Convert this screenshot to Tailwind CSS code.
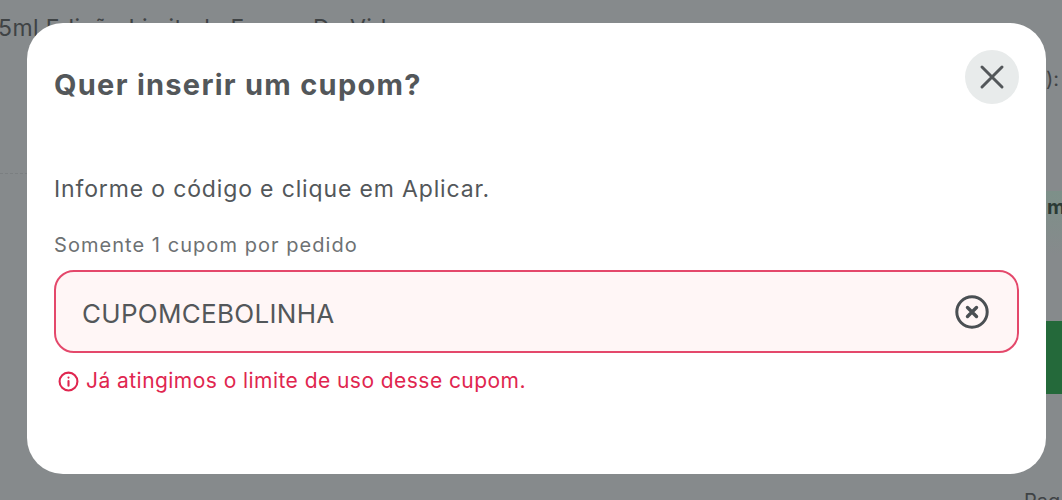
<!DOCTYPE html>
<html lang="pt-BR">
  <head>
    <meta charset="UTF-8" />
    <title>Cupom</title>
    <script src="https://cdn.jsdelivr.net/npm/@tailwindcss/browser@4"></script>
  </head>
  <body class="font-['Inter',sans-serif]">
    <div class="relative w-[1062px] h-[500px] overflow-hidden bg-[#868a8c]">
      <!-- page behind the overlay -->
      <div class="flex h-full">
        <div class="w-[1046px] shrink-0">
          <p class="-ml-[2px] mt-[14px] text-[23px] leading-7 tracking-[0.4px] text-[#3f4345] whitespace-nowrap">5ml Edição Limitada Forças Da Vida</p>
          <div class="mt-[131px] border-t border-dashed border-[#7b7f81]"></div>
        </div>
        <div class="flex-1">
          <p class="mt-[67px] text-[20px] leading-6 text-[#3f4345] whitespace-nowrap">):</p>
          <div class="mt-[100px] h-[64px] bg-gradient-to-b from-[#7d9089] to-[#868a8c] text-[20px] font-bold leading-[32px] text-[#2b3a35] pl-px overflow-hidden">m</div>
          <div class="mt-[66px] h-[73px] bg-[#24693a]"></div>
          <p class="mt-[95px] -ml-[22px] text-[20px] leading-6 text-[#3f4345] whitespace-nowrap">Pag</p>
        </div>
      </div>

      <!-- modal -->
      <div class="absolute left-[27px] top-[23px] w-[1019px] h-[451px] rounded-[36px] bg-white px-[27px] pt-[44px]">
        <div class="flex items-start justify-between">
          <h2 class="text-[29px] leading-9 font-bold tracking-[1.27px] text-[#53575a]">Quer inserir um cupom?</h2>
          <button class="-mt-[17px] flex h-[54px] w-[54px] items-center justify-center rounded-full bg-[#e8ebeb]">
            <svg width="26" height="26" viewBox="0 0 26 26" fill="none" stroke="#53575a" stroke-width="3" stroke-linecap="round"><path d="M3 3 23 23M23 3 3 23" /></svg>
          </button>
        </div>
        <p class="mt-[69px] text-[23px] leading-8 tracking-[0.85px] text-[#53575a]">Informe o código e clique em Aplicar.</p>
        <label class="mt-[28px] block text-[20px] leading-6 tracking-[1.05px] text-[#6d7173]">Somente 1 cupom por pedido</label>
        <div class="mt-[13px] flex h-[83px] items-center justify-between rounded-[20px] border-2 border-[#e4486b] bg-[#fff6f6] pl-[26px] pr-[28px]">
          <span class="mt-[3px] text-[26px] tracking-[0.3px] text-[#53575a]">CUPOMCEBOLINHA</span>
          <svg width="34" height="34" viewBox="0 0 34 34" fill="none" stroke="#4a4f53" stroke-linecap="round"><circle cx="17" cy="17" r="15.2" stroke-width="3" /><path d="M12.5 12.5 21.5 21.5M21.5 12.5 12.5 21.5" stroke-width="3.4" /></svg>
        </div>
        <div class="mt-[16px] ml-[4px] flex items-center gap-[7px] text-[21px] leading-6 tracking-[0.45px] text-[#e0264f]">
          <svg width="21" height="21" viewBox="0 0 20 20" fill="none" stroke="#e0264f" stroke-width="2" stroke-linecap="round"><circle cx="10" cy="10" r="8.5" /><path d="M10 9.5V14M10 6.2V6.3" /></svg>
          <span>Já atingimos o limite de uso desse cupom.</span>
        </div>
      </div>
    </div>
  </body>
</html>
